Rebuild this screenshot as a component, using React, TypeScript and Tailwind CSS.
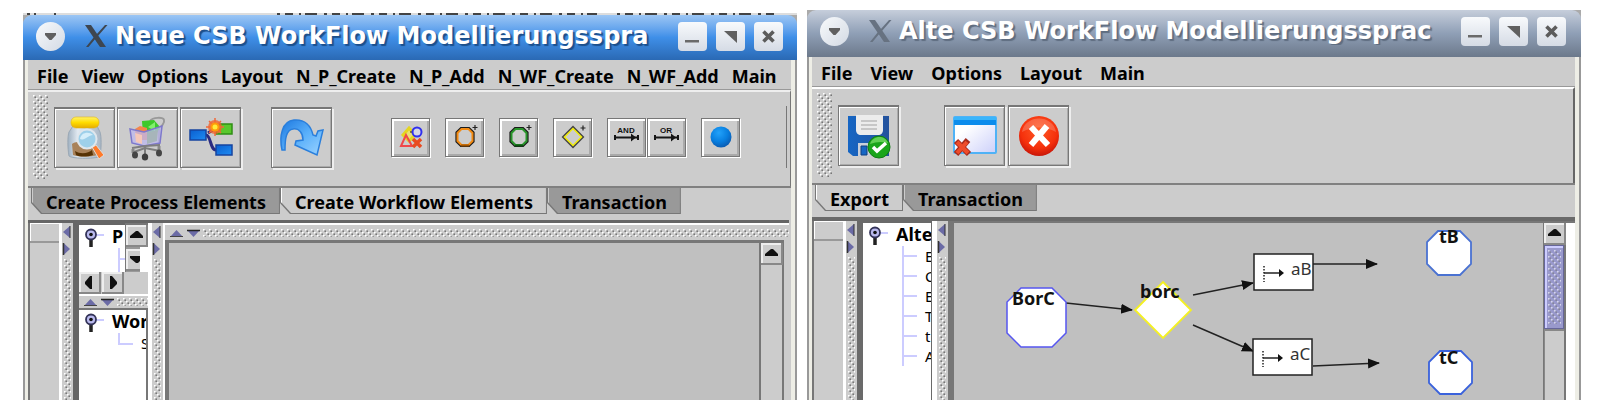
import type { ReactNode } from "react";

const bodyFont = "font-['Noto_Sans',sans-serif]";

function Dots({ id, className = "" }: { id: string; className?: string }) {
  return (
    <svg className={className} width="100%" height="100%" aria-hidden="true">
      <defs>
        <pattern id={id} width="6" height="6" patternUnits="userSpaceOnUse">
          <rect x="0" y="0" width="1.6" height="1.6" fill="#fff" />
          <rect x="1.4" y="1.4" width="1.6" height="1.6" fill="#777" />
          <rect x="3" y="3" width="1.6" height="1.6" fill="#fff" />
          <rect x="4.4" y="4.4" width="1.6" height="1.6" fill="#777" />
        </pattern>
      </defs>
      <rect width="100%" height="100%" fill={`url(#${id})`} />
    </svg>
  );
}

function TitleButton({ label, children }: { label: string; children: ReactNode }) {
  return (
    <button
      type="button"
      aria-label={label}
      className="flex size-[29px] shrink-0 items-center justify-center rounded-[4px] bg-linear-to-b from-[#f8fafc] to-[#d5dbe5]"
    >
      <svg width="29" height="29" viewBox="0 0 29 29">
        {children}
      </svg>
    </button>
  );
}

function TitleBar({ title, active }: { title: string; active: boolean }) {
  return (
    <header
      className={
        active
          ? "flex h-[45px] shrink-0 items-start rounded-t-[9px] bg-linear-to-b from-[#9cc6f4] via-[#3f8fe8] to-[#2a69b4] pt-[7px] pr-[14px] pl-[13px]"
          : "flex h-[47px] shrink-0 items-start rounded-t-[9px] bg-linear-to-b from-[#c6cedb] via-[#8f9fb6] to-[#6c798b] pt-[7px] pr-[15px] pl-[13px]"
      }
    >
      <button
        type="button"
        aria-label="Window menu"
        className="size-[29px] shrink-0 rounded-full bg-linear-to-br from-[#f8fafc] to-[#d3dae4]"
      >
        <svg width="29" height="29" viewBox="0 0 29 29">
          <path d="M9 11h11v2l-4.500 5h-2L9 13z" fill="#606060" />
        </svg>
      </button>
      <svg className="mt-[3px] ml-[20px] shrink-0" width="24" height="24" viewBox="0 0 24 24" aria-hidden="true">
        <path d="M0 0h6l15 22h-6z" fill={active ? "#3e4650" : "#677281"} />
        <path d="M20 0h2.500L13 11l-1.500-1.600zM9 12l1.600 1.600L3.500 22H1z" fill={active ? "#3e4650" : "#677281"} />
      </svg>
      <h1
        className={
          active
            ? "mr-[14px] ml-[6px] min-w-0 flex-1 overflow-hidden font-['DejaVu_Sans',sans-serif] text-[24px] leading-7 font-bold whitespace-nowrap text-white [text-shadow:2px_2px_1px_#1c4f8c]"
            : "mr-[18px] ml-[6px] min-w-0 flex-1 overflow-hidden font-['DejaVu_Sans',sans-serif] text-[24px] leading-7 font-bold whitespace-nowrap text-white [text-shadow:2px_2px_1px_#5f6d80]"
        }
      >
        {title}
      </h1>
      <div className="flex shrink-0 gap-[9px]">
        <TitleButton label="Minimize">
          <path d="M7 18h14v2.500H7z" fill="#6a6a6a" />
        </TitleButton>
        <TitleButton label="Maximize">
          <path d="M8 9h13v12z" fill="#606060" />
        </TitleButton>
        <TitleButton label="Close">
          <path d="M9.500 9.500l10 10M19.500 9.500l-10 10" stroke="#5c5c5c" strokeWidth="3.600" />
        </TitleButton>
      </div>
    </header>
  );
}

function MenuBar({ items, wide }: { items: string[]; wide: boolean }) {
  return (
    <nav
      className={
        wide
          ? "flex h-[30px] shrink-0 items-center gap-[18px] border-b border-[#999] pt-[2px] pl-[9px]"
          : "flex h-[30px] shrink-0 items-center gap-[13px] border-b border-[#999] pt-[2px] pl-[9px]"
      }
    >
      {items.map((item) => (
        <button key={item} type="button" className="text-[18px] leading-6 font-bold whitespace-nowrap text-black">
          {item}
        </button>
      ))}
    </nav>
  );
}

function ToolButton({ label, small = false, children }: { label: string; small?: boolean; children: ReactNode }) {
  return (
    <button
      type="button"
      aria-label={label}
      className={
        small
          ? "flex size-[39px] shrink-0 items-center justify-center border border-[#777] shadow-[inset_2px_2px_0_#fff,inset_-2px_-2px_0_#aaa,1px_1px_0_#fff]"
          : "flex size-[61px] shrink-0 items-center justify-center border border-t-2 border-[#777] shadow-[inset_1px_1px_0_#fff,inset_-1px_-1px_0_#aaa,2px_2px_0_#eee]"
      }
    >
      {children}
    </button>
  );
}

function Tabs({ tabs, selected }: { tabs: string[]; selected: string }) {
  return (
    <div role="tablist" className="flex shrink-0 border-t-2 border-[#808080] pb-[6px] pl-[3px]">
      {tabs.map((tab) => (
        <button
          key={tab}
          type="button"
          role="tab"
          aria-selected={tab === selected}
          className="h-[26px] bg-[#777] pr-px pb-px pl-px [clip-path:polygon(0_0,100%_0,100%_100%,10px_100%,0_15px)]"
        >
          <span
            className={
              tab === selected
                ? "flex h-full items-center border-l border-white bg-[#ccc] px-[13px] pt-[2px] text-[18px] leading-6 font-bold whitespace-nowrap text-black [clip-path:polygon(0_0,100%_0,100%_100%,10px_100%,0_14px)]"
                : "flex h-full items-center border-l border-[#ccc] bg-[#999] px-[13px] pt-[2px] text-[18px] leading-6 font-bold whitespace-nowrap text-black [clip-path:polygon(0_0,100%_0,100%_100%,10px_100%,0_14px)]"
            }
          >
            {tab}
          </span>
        </button>
      ))}
    </div>
  );
}

function VSplitter({ id }: { id: string }) {
  return (
    <div className="flex w-[11px] shrink-0 flex-col bg-[#ccc]">
      <svg className="shrink-0" width="11" height="36" viewBox="0 0 11 36" aria-hidden="true">
        <path d="M8 3v12L1 9z" fill="#6b6ba6" />
        <path d="M8 3v12" stroke="#333" />
        <path d="M1.500 20v12L8 26z" fill="#6b6ba6" />
        <path d="M1.500 20v12" stroke="#333" strokeWidth="1.500" />
      </svg>
      <div className="min-h-0 flex-1 px-[2px]">
        <Dots id={id} />
      </div>
    </div>
  );
}

function HSplitter({ id, tall = false }: { id: string; tall?: boolean }) {
  return (
    <div
      className={
        tall
          ? "flex h-[17px] shrink-0 items-center border-t-2 border-white bg-[#ccc]"
          : "flex h-[14px] shrink-0 items-center border-t-2 border-white bg-[#ccc]"
      }
    >
      <svg className="shrink-0" width="38" height="10" viewBox="0 0 38 10" aria-hidden="true">
        <path d="M5 9h13l-6.500-7z" fill="#6b6ba6" />
        <path d="M5 8.500h13" stroke="#444" />
        <path d="M22 2h13l-6.500 7z" fill="#6b6ba6" />
        <path d="M22 2.500h13" stroke="#222" strokeWidth="1.500" />
      </svg>
      <div className="h-[8px] min-w-0 flex-1">
        <Dots id={id} />
      </div>
    </div>
  );
}

const arrowPaths = {
  up: "M4 13h13v-2l-5-5h-2l-6 5z",
  down: "M4 7h13v2l-5 5h-2L4 9z",
  left: "M13 4v13h-2l-5-5v-2l5-6z",
  right: "M8 4v13h2l5-5v-2l-5-6z",
};

function ArrowButton({ dir }: { dir: keyof typeof arrowPaths }) {
  return (
    <button
      type="button"
      aria-label={`Scroll ${dir}`}
      className="flex size-[22px] shrink-0 items-center justify-center border-r-2 border-b-2 border-[#888] bg-[#ccc] shadow-[inset_2px_2px_0_#eee]"
    >
      <svg width="20" height="20" viewBox="0 0 20 20">
        <path d={arrowPaths[dir]} fill="#111" />
      </svg>
    </button>
  );
}

function TreeHandle() {
  return (
    <svg className="shrink-0" width="22" height="22" viewBox="0 0 22 22" aria-hidden="true">
      <path d="M14 9h8" stroke="#ccf" strokeWidth="2" />
      <path d="M9 13v8" stroke="#222" strokeWidth="3.500" />
      <circle cx="9" cy="8.500" r="5" fill="#b9b9ee" stroke="#333358" strokeWidth="1.800" />
      <circle cx="9" cy="8.500" r="1.800" fill="#111" />
    </svg>
  );
}

function SidePane() {
  return (
    <div className="flex w-[34px] shrink-0 flex-col border-r-[3px] border-l-2 border-r-white border-l-[#777] bg-[#ccc]">
      <div className="h-[20px] border-b-2 border-[#999] shadow-[inset_1px_1px_0_#fff]" />
    </div>
  );
}

function JarIcon() {
  return (
    <svg width="44" height="46" viewBox="0 0 44 46">
      <defs>
        <linearGradient id="lid" x1="0" y1="0" x2="0" y2="1">
          <stop offset="0" stopColor="#fff36a" />
          <stop offset=".5" stopColor="#ffdc00" />
          <stop offset="1" stopColor="#e5ac00" />
        </linearGradient>
        <linearGradient id="glass" x1="0" y1="0" x2="1" y2="0">
          <stop offset="0" stopColor="#9fb0c0" />
          <stop offset=".3" stopColor="#e2eaf2" />
          <stop offset="1" stopColor="#a8b6c4" />
        </linearGradient>
      </defs>
      <path d="M10 11h24l3 6c1.500 4 1.500 16 0 24-1 3-28 3-31 0-1.500-8-1.500-20 0-24z" fill="url(#glass)" stroke="#9aa8b5" />
      <path d="M9 29c3-3 20-3 24 1l1 10c-6 2-18 2-24 0z" fill="#a9825a" />
      <path d="M12 36c6 4 14 2 17-1l1 5c-6 2-13 2-17 0z" fill="#573306" />
      <rect x="8" y="2" width="28" height="11" rx="5" fill="url(#lid)" stroke="#e0b416" strokeWidth=".6" />
      <path d="M29 32l4-2 8 10-5 4z" fill="#ff7a2a" stroke="#ddd" />
      <circle cx="24" cy="24" r="9.500" fill="#9ed0ea" stroke="#dfe6ec" strokeWidth="2" />
      <path d="M17 24c1-7 9-8 13-4-5 0-8 6-13 4z" fill="#d5eefa" />
    </svg>
  );
}

function CartIcon() {
  return (
    <svg width="44" height="46" viewBox="0 0 44 46">
      <path d="M24 6c3-4 13-4 14-1s-3 7-5 8v18" fill="none" stroke="#999" strokeWidth="2" />
      <path d="M16 6l12-1 6 7-4 8H17z" fill="#3ec92c" />
      <path d="M22 12l7-5v9z" fill="#82f06d" />
      <path d="M9 14l5-3 7 2v12H10z" fill="#f4864c" />
      <path d="M4 14l14 3 18-6-2 17-16 3-12-3z" fill="#bdb8ef" fillOpacity=".75" stroke="#7d78cc" strokeWidth="1.500" />
      <path d="M9 18l7 2v9l-6-2z" fill="#f6c8b8" />
      <path d="M21 18l11-3-1 11-10 3z" fill="#a7b5ba" />
      <path d="M6 33l13-2 15-1M8 37l11-4 15 3M19 31v9" fill="none" stroke="#7e7e7e" strokeWidth="2" />
      <path d="M7 34v4M33 31v4" stroke="#888" strokeWidth="3" />
      <ellipse cx="9" cy="40" rx="3" ry="3.500" fill="#454545" />
      <ellipse cx="19" cy="42" rx="3.200" ry="3.500" fill="#3e3e3e" />
      <ellipse cx="33" cy="38" rx="3" ry="3.500" fill="#454545" />
    </svg>
  );
}

function FlowIcon() {
  return (
    <svg width="46" height="40" viewBox="0 0 46 40">
      <defs>
        <linearGradient id="blueBox" x1="0" y1="0" x2="1" y2="1">
          <stop offset="0" stopColor="#0a5fd0" />
          <stop offset="1" stopColor="#1f8cf2" />
        </linearGradient>
      </defs>
      <path d="M18 17c5 0 4 15 10 15M20 15l8-5" fill="none" stroke="#2b2b80" strokeWidth="3" />
      <rect x="28" y="6" width="16" height="10" fill="#59c82c" stroke="#2f8e15" strokeWidth="1.500" />
      <rect x="2" y="12" width="16" height="10" fill="url(#blueBox)" stroke="#1644a0" strokeWidth="1.500" />
      <rect x="28" y="27" width="16" height="10" fill="url(#blueBox)" stroke="#1644a0" strokeWidth="1.500" />
      <circle cx="27" cy="9" r="7" fill="#f2642b" fillOpacity=".8" />
      <path d="M27 0v18M18 9h18M21 3l12 12M33 3L21 15" stroke="#f0683a" strokeWidth="1.500" />
      <circle cx="27" cy="9" r="4.500" fill="#ff9a0a" />
      <circle cx="27" cy="9" r="2.500" fill="#ffec3a" />
    </svg>
  );
}

function RedoIcon() {
  return (
    <svg width="48" height="42" viewBox="0 0 48 42">
      <defs>
        <linearGradient id="redo" x1="0" y1="0" x2="1" y2="1">
          <stop offset="0" stopColor="#1c78e0" />
          <stop offset=".5" stopColor="#5ab0fa" />
          <stop offset="1" stopColor="#9dd4ff" />
        </linearGradient>
      </defs>
      <path
        d="M4 33C1 19 4 4 16 3c11-1 17 6 19 15l3 1 2-5 5-1-6 25-22-10 1-4 7-1C25 16 21 11 15 12 8 13 7 22 7 33z"
        fill="url(#redo)"
        stroke="#2a7fdc"
        strokeWidth="1.500"
      />
    </svg>
  );
}

function ShapesIcon() {
  return (
    <svg width="28" height="28" viewBox="0 0 28 28">
      <path d="M12 5l6 7-6 6-6-6z" fill="#eadf76" stroke="#e5d620" strokeWidth="3" />
      <path d="M13 9h5" stroke="#222" />
      <path d="M9 12l6 11H4z" fill="none" stroke="#f0484a" strokeWidth="2" />
      <circle cx="20" cy="9" r="4.500" fill="#d5d5e6" stroke="#3030ee" strokeWidth="2" />
      <path d="M16 16l8 8M24 16l-8 8" stroke="#e84b20" strokeWidth="3.500" />
    </svg>
  );
}

function NodeIcon({ color, dark }: { color: string; dark: string }) {
  return (
    <svg width="28" height="28" viewBox="0 0 28 28">
      <path d="M10 5h8l4.500 4.500v9L18 23h-8l-4.500-4.500v-9z" fill="none" stroke="#1a1a1a" strokeWidth="2.200" />
      <path d="M10.500 6h7l4 4v8l-4 4h-7l-4-4v-8z" fill="none" stroke={color} strokeWidth="2" />
      <path d="M10 22.500h8" stroke={dark} strokeWidth="2" />
      <path d="M24 2v5M21.500 4.500h5" stroke="#222" strokeWidth="1.200" />
    </svg>
  );
}

function DiamondIcon() {
  return (
    <svg width="28" height="28" viewBox="0 0 28 28">
      <path d="M14 4l10 10-10 10L4 14z" fill="none" stroke="#444" strokeWidth="2" />
      <path d="M14 5.500l8.500 8.500-8.500 8.500L5.500 14z" fill="none" stroke="#f2ee08" strokeWidth="1.500" />
      <path d="M24 2.500v5M21.500 5h5" stroke="#222" strokeWidth="1.200" />
    </svg>
  );
}

function GateIcon({ text }: { text: string }) {
  return (
    <svg width="30" height="28" viewBox="0 0 30 28">
      <text x="14" y="10" textAnchor="middle" fontFamily="Liberation Sans" fontSize="8" fontWeight="bold" fill="#111">
        {text}
      </text>
      <path d="M3 12v5M3 14.500h22M26 12v5" stroke="#151515" strokeWidth="2" />
      <path d="M19 10.500v8l5-4z" fill="#151515" />
    </svg>
  );
}

function BallIcon() {
  return (
    <svg width="24" height="24" viewBox="0 0 24 24">
      <defs>
        <radialGradient id="ball" cx=".4" cy=".3" r=".7">
          <stop offset="0" stopColor="#22a2fa" />
          <stop offset=".6" stopColor="#087fe0" />
          <stop offset="1" stopColor="#0a5db4" />
        </radialGradient>
      </defs>
      <circle cx="12" cy="12" r="10.500" fill="url(#ball)" />
    </svg>
  );
}

function SaveIcon() {
  return (
    <svg width="46" height="46" viewBox="0 0 46 46">
      <defs>
        <linearGradient id="disk" x1="0" y1="0" x2="1" y2="0">
          <stop offset="0" stopColor="#1666c4" />
          <stop offset="1" stopColor="#24529c" />
        </linearGradient>
      </defs>
      <path d="M2 3h41v40H7l-5-4z" fill="url(#disk)" />
      <path d="M10 2h27v15c0 3-2 5-5 5H15c-3 0-5-2-5-5z" fill="#ececec" />
      <path d="M15 8h16M15 12h16M15 16h16" stroke="#bbb" strokeWidth="1.500" />
      <path d="M12 30h22v13H12z" fill="#c9d0da" />
      <path d="M15 33h6v9h-6z" fill="#1666c4" stroke="#123f80" />
      <circle cx="33" cy="34" r="11" fill="#1aa51a" stroke="#0f7d12" />
      <path d="M24 31c3-9 15-9 18-1-7-2-12-1-18 1z" fill="#62cf55" />
      <path d="M27 34l4 4 9-8" fill="none" stroke="#fff" strokeWidth="3.500" />
    </svg>
  );
}

function WindowIcon() {
  return (
    <svg width="46" height="42" viewBox="0 0 46 42">
      <defs>
        <linearGradient id="pane" x1="0" y1="0" x2="1" y2="1">
          <stop offset=".3" stopColor="#fff" />
          <stop offset="1" stopColor="#ccd0fa" />
        </linearGradient>
      </defs>
      <rect x="2" y="2" width="42" height="36" rx="1" fill="url(#pane)" stroke="#4fb2f6" strokeWidth="2" />
      <path d="M2 2h42v8H2z" fill="#0c8cec" />
      <path d="M2 2h42v3H2z" fill="#3ab5fb" />
      <path d="M4 26l13 13M16 25L4 39" stroke="#a82b1c" strokeWidth="6" />
      <path d="M5 27l11 11M15 27L5 38" stroke="#ee4b2a" strokeWidth="4" />
    </svg>
  );
}

function CancelIcon() {
  return (
    <svg width="44" height="44" viewBox="0 0 44 44">
      <defs>
        <radialGradient id="stop" cx=".5" cy=".35" r=".65">
          <stop offset="0" stopColor="#ff5a26" />
          <stop offset=".7" stopColor="#f5300c" />
          <stop offset="1" stopColor="#c81608" />
        </radialGradient>
      </defs>
      <circle cx="22" cy="22" r="20" fill="url(#stop)" />
      <path d="M5 18C8 0 36 0 39 18 28 12 16 12 5 18z" fill="#fff" fillOpacity=".2" />
      <path d="M14 13l17 18M30 12L14 31" stroke="#fff" strokeWidth="6" />
    </svg>
  );
}

function octagon(x: number, y: number, size: number, cut: number) {
  const r = x + size;
  const b = y + size;
  return `M${x + cut} ${y}H${r - cut}L${r} ${y + cut}V${b - cut}L${r - cut} ${b}H${x + cut}L${x} ${b - cut}V${y + cut}z`;
}

function ActionNode({ x, y, text }: { x: number; y: number; text: string }) {
  return (
    <g>
      <rect x={x} y={y} width="59" height="36" fill="#fff" stroke="#222" strokeWidth="1.500" />
      <path d={`M${x + 10} ${y + 12}v16`} stroke="#222" strokeWidth="1.500" strokeDasharray="1.500 1.500" />
      <path d={`M${x + 10} ${y + 19}h18`} stroke="#222" strokeWidth="1.500" />
      <path d={`M${x + 25} ${y + 15}v8l5-4z`} fill="#111" />
      <text x={x + 37} y={y + 21} fontSize="17" fill="#333">
        {text}
      </text>
    </g>
  );
}

function Diagram() {
  return (
    <svg className="block h-full w-full" role="img" aria-label="Workflow diagram">
      <defs>
        <marker id="head" markerUnits="userSpaceOnUse" markerWidth="12" markerHeight="12" refX="11" refY="6" orient="auto">
          <path d="M0 1l12 5-12 5z" fill="#111" />
        </marker>
      </defs>
      <g stroke="#222" strokeWidth="1.500">
        <path d="M112 80l66 7" markerEnd="url(#head)" />
        <path d="M239 72l60-12" markerEnd="url(#head)" />
        <path d="M239 102l60 26" markerEnd="url(#head)" />
        <path d="M359 41h64" markerEnd="url(#head)" />
        <path d="M359 143l66-3" markerEnd="url(#head)" />
      </g>
      <path d={octagon(53, 65, 59, 14)} fill="#fff" stroke="#5656f0" strokeWidth="1.500" />
      <path d="M209 59l28 28-28 28-28-28z" fill="#fff" stroke="#f4f022" strokeWidth="1.800" />
      <ActionNode x={300} y={31} text="aB" />
      <ActionNode x={299} y={116} text="aC" />
      <path d={octagon(473, 8, 44, 11)} fill="#fff" stroke="#4a72d2" strokeWidth="1.800" />
      <path d={octagon(475, 128, 43, 11)} fill="#fff" stroke="#3a62dc" strokeWidth="1.800" />
      <g fontSize="18" fontWeight="bold" fill="#111">
        <text x="58" y="82">BorC</text>
        <text x="186" y="75">borc</text>
        <text x="485" y="20">tB</text>
        <text x="485" y="141">tC</text>
      </g>
    </svg>
  );
}

function NewWindow() {
  return (
    <section className="mt-[13px] flex min-w-0 flex-1 flex-col">
      <svg className="shrink-0 bg-[#ddd]" width="100%" height="2" aria-hidden="true">
        <path d="M4 1h3m4 0h2m18 0h2M254 1h320m20 0h160" stroke="#444" strokeWidth="2" strokeDasharray="3 5 8 6 2 4 12 7" />
      </svg>
      <div className="flex min-h-0 flex-1 flex-col bg-[#aaa]">
        <TitleBar title="Neue CSB WorkFlow Modellierungsspra" active />
        <div className="flex min-h-0 flex-1 border-x-2 border-[#999]">
          <div className="flex min-h-0 min-w-0 flex-1 flex-col border-r-4 border-l-[3px] border-[#eeeee6] bg-[#ccc]">
            <MenuBar
              items={["File", "View", "Options", "Layout", "N_P_Create", "N_P_Add", "N_WF_Create", "N_WF_Add", "Main"]}
              wide={false}
            />
            <div role="toolbar" className="flex h-[96px] shrink-0 items-center border-t-2 border-r border-t-[#eee] border-r-[#777] pr-[3px] pb-[4px] pl-[5px]">
              <div className="h-[84px] w-[15px] shrink-0">
                <Dots id="grip-new" />
              </div>
              <div className="ml-[6px] flex shrink-0 gap-[2px]">
                <ToolButton label="Inspect jar"><JarIcon /></ToolButton>
                <ToolButton label="Cart"><CartIcon /></ToolButton>
                <ToolButton label="New workflow node"><FlowIcon /></ToolButton>
              </div>
              <div className="ml-[30px] shrink-0">
                <ToolButton label="Redo"><RedoIcon /></ToolButton>
              </div>
              <div className="ml-[59px] flex shrink-0 gap-[15px]">
                <ToolButton small label="Delete shapes"><ShapesIcon /></ToolButton>
                <ToolButton small label="Add orange node"><NodeIcon color="#f28a12" dark="#9a5204" /></ToolButton>
                <ToolButton small label="Add green node"><NodeIcon color="#2a962c" dark="#0b5410" /></ToolButton>
                <ToolButton small label="Add decision"><DiamondIcon /></ToolButton>
                <div className="flex gap-[1px]">
                  <ToolButton small label="Add AND"><GateIcon text="AND" /></ToolButton>
                  <ToolButton small label="Add OR"><GateIcon text="OR" /></ToolButton>
                </div>
                <ToolButton small label="Add ball"><BallIcon /></ToolButton>
              </div>
              <div className="ml-auto h-[62px] w-px shrink-0 bg-[#777]" />
            </div>
            <Tabs
              tabs={["Create Process Elements", "Create Workflow Elements", "Transaction"]}
              selected="Create Workflow Elements"
            />
            <div className="mr-[2px] flex min-h-0 flex-1 border-t-[3px] border-[#666]">
              <SidePane />
              <VSplitter id="split-new-1" />
              <div className="flex w-[75px] shrink-0 flex-col border-l-[6px] border-[#666]">
                <div className="flex h-[49px] shrink-0 overflow-hidden bg-white">
                  <div className="flex min-w-0 flex-1 flex-col border-t-2 border-[#666] pt-px pl-[3px]">
                    <div className="flex items-start">
                      <TreeHandle />
                      <span className="ml-[8px] text-[18px] leading-5 font-bold">P</span>
                    </div>
                    <svg className="ml-[36px] shrink-0" width="10" height="25" aria-hidden="true">
                      <path d="M1 0v25M1 11h9" stroke="#ccf" strokeWidth="2" fill="none" />
                    </svg>
                  </div>
                  <div className="relative flex flex-col gap-[2px] border-t-2 border-l border-[#777] bg-[#999]">
                    <ArrowButton dir="up" />
                    <ArrowButton dir="down" />
                    <div className="absolute top-[22px] left-[14px] h-[25px] w-[15px] bg-white" />
                  </div>
                </div>
                <div className="flex shrink-0 gap-px bg-[#ccc]">
                  <ArrowButton dir="left" />
                  <ArrowButton dir="right" />
                </div>
                <HSplitter id="split-new-2" />
                <div className="min-h-0 flex-1 overflow-hidden border-t-2 border-r-2 border-[#777] bg-white pt-px pl-[3px]">
                  <div className="flex items-start">
                    <TreeHandle />
                    <span className="ml-[8px] text-[18px] leading-5 font-bold">Wor</span>
                  </div>
                  <div className="ml-[36px] flex items-start">
                    <svg className="shrink-0" width="15" height="12" aria-hidden="true">
                      <path d="M1 0v11h14" stroke="#ccf" strokeWidth="2" fill="none" />
                    </svg>
                    <span className="ml-[8px] text-[15px] leading-5">S</span>
                  </div>
                </div>
              </div>
              <div className="w-[4px] shrink-0 bg-white" />
              <VSplitter id="split-new-3" />
              <div className="flex min-w-0 flex-1 flex-col border-l-2 border-white">
                <HSplitter id="split-new-4" tall />
                <div className="mr-[5px] flex min-h-0 flex-1 border-t-[3px] border-r-2 border-l-4 border-[#777] bg-[#c0c0c0]">
                  <div className="flex-1" />
                  <div className="w-[23px] shrink-0 border-l-2 border-[#777] bg-[#ccc]">
                    <ArrowButton dir="up" />
                  </div>
                </div>
              </div>
            </div>
          </div>
        </div>
      </div>
    </section>
  );
}

function OldWindow() {
  return (
    <section className="mt-[10px] flex min-w-0 flex-1 flex-col bg-[#aaa]">
      <TitleBar title="Alte CSB WorkFlow Modellierungssprac" active={false} />
      <div className="flex min-h-0 flex-1 border-x-2 border-[#999]">
        <div className="flex min-h-0 min-w-0 flex-1 flex-col border-r-4 border-l-[3px] border-[#eeeee6] bg-[#ccc]">
          <MenuBar items={["File", "View", "Options", "Layout", "Main"]} wide />
          <div role="toolbar" className="flex h-[96px] shrink-0 items-center border-t-2 border-r-2 border-t-[#fff] border-r-[#666] pb-[2px] pl-[5px]">
            <div className="h-[84px] w-[15px] shrink-0">
              <Dots id="grip-old" />
            </div>
            <div className="ml-[6px] shrink-0">
              <ToolButton label="Save"><SaveIcon /></ToolButton>
            </div>
            <div className="ml-[45px] flex shrink-0 gap-[3px]">
              <ToolButton label="Close window"><WindowIcon /></ToolButton>
              <ToolButton label="Cancel"><CancelIcon /></ToolButton>
            </div>
          </div>
          <Tabs tabs={["Export", "Transaction"]} selected="Export" />
          <div className="flex min-h-0 flex-1 border-t-[4px] border-[#6a6a6a]">
            <SidePane />
            <VSplitter id="split-old-1" />
            <div className="w-[75px] shrink-0 overflow-hidden border-t-2 border-r border-l-[6px] border-[#6a6a6a] bg-white pt-px pl-[3px]">
              <div className="flex items-start">
                <TreeHandle />
                <span className="ml-[8px] text-[18px] leading-5 font-bold">Alte</span>
              </div>
              <ul className="ml-[36px] border-l-2 border-[#ccf]">
                {["E", "C", "E", "T", "t", "A"].map((letter, index) => (
                  <li key={index} className="flex h-[20px] items-center">
                    <span className="h-[2px] w-[13px] shrink-0 bg-[#ccf]" />
                    <span className="ml-[8px] text-[15px] leading-5">{letter}</span>
                  </li>
                ))}
              </ul>
            </div>
            <div className="w-[5px] shrink-0 bg-white" />
            <VSplitter id="split-old-2" />
            <div className="flex min-w-0 flex-1 border-t-2 border-l-[6px] border-[#777] bg-[#c0c0c0]">
              <div className="min-w-0 flex-1 overflow-hidden">
                <Diagram />
              </div>
              <div className="flex w-[23px] shrink-0 flex-col border-r-2 border-l border-[#777] bg-[#ccc]">
                <ArrowButton dir="up" />
                <div className="h-[84px] w-full border border-[#666699] bg-[#9999cc] py-[4px] pr-[2px] pl-[3px] shadow-[inset_2px_2px_0_#ccccff]">
                  <Dots id="thumb" className="opacity-60" />
                </div>
                <div className="min-h-0 flex-1 border-t-2 border-l border-[#888]" />
              </div>
              <div className="w-[9px] shrink-0 bg-white" />
            </div>
          </div>
        </div>
      </div>
    </section>
  );
}

export default function App() {
  return (
    <main className={`flex h-screen gap-[10px] overflow-hidden bg-white pr-[19px] pl-[23px] text-black ${bodyFont}`}>
      <NewWindow />
      <OldWindow />
    </main>
  );
}
